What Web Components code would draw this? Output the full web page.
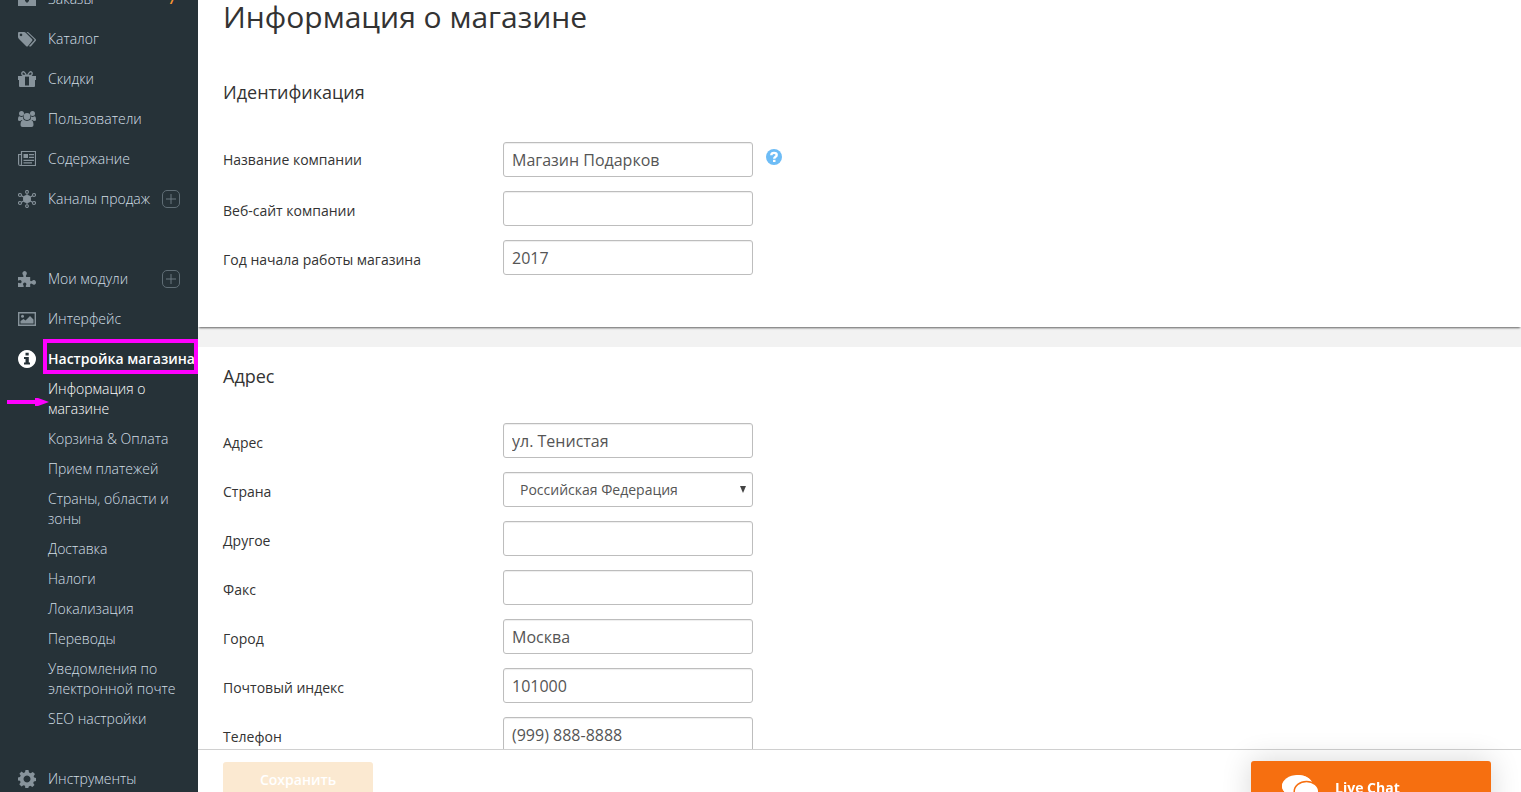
<!DOCTYPE html>
<html lang="ru">
<head>
<meta charset="utf-8">
<title>Информация о магазине</title>
<style>
html,body{height:100%}
body{margin:0;font-family:"Open Sans","Noto Sans",sans-serif;font-size:14px;line-height:20px;color:#333;overflow:hidden}
</style>
</head>
<body>
<admin-app>
  <side-nav slot="nav">
    <nav-item icon="orders" badge="7">Заказы</nav-item>
    <nav-item icon="tags">Каталог</nav-item>
    <nav-item icon="gift">Скидки</nav-item>
    <nav-item icon="users">Пользователи</nav-item>
    <nav-item icon="news">Содержание</nav-item>
    <nav-item icon="hub" add>Каналы продаж</nav-item>
    <nav-item icon="puzzle" add group>Мои модули</nav-item>
    <nav-item icon="image">Интерфейс</nav-item>
    <nav-item icon="info" active>Настройка магазина</nav-item>
    <sub-nav>
      <sub-item active>Информация о магазине</sub-item>
      <sub-item>Корзина &amp; Оплата</sub-item>
      <sub-item>Прием платежей</sub-item>
      <sub-item>Страны, области и зоны</sub-item>
      <sub-item>Доставка</sub-item>
      <sub-item>Налоги</sub-item>
      <sub-item>Локализация</sub-item>
      <sub-item>Переводы</sub-item>
      <sub-item>Уведомления по электронной почте</sub-item>
      <sub-item>SEO настройки</sub-item>
    </sub-nav>
    <nav-item icon="gear">Инструменты</nav-item>
  </side-nav>
  <page-title>Информация о магазине</page-title>
  <form-section heading="Идентификация" first>
    <form-row label="Название компании" value="Магазин Подарков" help></form-row>
    <form-row label="Веб-сайт компании"></form-row>
    <form-row label="Год начала работы магазина" value="2017"></form-row>
  </form-section>
  <form-section heading="Адрес">
    <form-row label="Адрес" value="ул. Тенистая"></form-row>
    <form-row label="Страна" type="select" value="Российская Федерация"></form-row>
    <form-row label="Другое"></form-row>
    <form-row label="Факс"></form-row>
    <form-row label="Город" value="Москва"></form-row>
    <form-row label="Почтовый индекс" value="101000"></form-row>
    <form-row label="Телефон" value="(999) 888-8888"></form-row>
  </form-section>
  <save-bar slot="footer">Сохранить</save-bar>
  <live-chat slot="chat">Live Chat</live-chat>
</admin-app>
<script>
const ICONS = {
  orders:'<path fill-rule="evenodd" d="M0 1h18v15H0zM7 9v2l2 2 2-2V9z"/>',
  tags:'<path fill-rule="evenodd" d="M0 3q0-1 1-1h5q1 0 2 1l6 6q1 1 0 2l-4 5q-1 1-2 0L1 9Q0 8 0 7zM3 3.600a1.300 1.300 0 1 0 .01 0z"/><path d="M8.500 2h1.500l7.500 7q1 1 0 2l-4.500 5.200q-1 .8-2-.2l5.200-5.500q.5-.7 0-1.300z"/>',
  gift:'<path d="M0 6h7v6H1V10H0zM11 6h7v4h-1v2h-6zM1 10h6v7H2q-1 0-1-1zM11 10h6v6q0 1-1 1h-5zM7 5h4v1.500H7zM7 15.500h4V17H7z"/><path d="M8.500 5.500C7 2 5.500 1.400 4.500 2S3.500 5 5 5.500zM9.500 5.500C11 2 12.500 1.400 13.500 2S14.500 5 13 5.500z" fill="none" stroke="currentColor" stroke-width="1.400"/>',
  users:'<circle cx="3.500" cy="3.500" r="2.500"/><circle cx="14.500" cy="3.500" r="2.500"/><circle cx="9" cy="6.500" r="3.400"/><path d="M0 10q0-4 1.500-3.700 2 1.200 3.500.2Q4.800 8.500 6 10H3.500Q2.500 11 2 11 0 11 0 10zM18 10q0-4-1.500-3.700-2 1.200-3.500.2.200 2-1 3.500h2.500q1 1 1.500 1 2 0 2-1zM2.500 15q0-5 3-5.200Q9 12 12.500 9.800q3 .2 3 5.200 0 2-2 2h-9q-2 0-2-2z"/>',
  news:'<path d="M3.500 1.500h14v14H2.500Q.6 15.500.6 14V4.500h2.900zM3.500 4v10q0 1.400-1.200 1.500" fill="none" stroke="currentColor" stroke-width="1.200"/><path d="M5.500 4H10v4H5.500zM11 4h5v1.200h-5zM11 6.800h5V8h-5zM5.500 9.700H16v1.200H5.500zM5.500 12.300H14v1.200H5.500z"/>',
  hub:'<g fill="none" stroke="currentColor" stroke-width="1.100"><circle cx="9" cy="1.900" r="1.400"/><circle cx="9" cy="16.100" r="1.400"/><circle cx="2" cy="5" r="1.500"/><circle cx="16" cy="5" r="1.500"/><circle cx="2" cy="13" r="1.500"/><circle cx="16" cy="13" r="1.500"/><path d="M9 3.500v11M3.500 5.800l11 6.400M14.500 5.800l-11 6.400"/></g><circle cx="9" cy="9" r="4"/>',
  puzzle:'<path d="M0 7h5.300Q5.800 6 5 5q-1-1.300-.5-2.500Q5.200 1 6.700 1t2 1.500Q9.200 4 8.200 5q-.7 1 0 2h4v3.800q1 .8 2-.1 1.200-1.200 2.700-.4Q18 11 18 12.500t-1.100 2q-1.500.7-2.600-.4-1.100-1-2.100 0V17H8q-.6-.8 0-1.700.9-1.300 0-2.400-1.200-.9-2.500 0-1 1.200 0 2.500.5.900 0 1.600H0v-4q.5-.6 1.500 0 1.300.6 2-.5.500-1.500-.6-2.300-1.200-.6-2.200.3-.6.300-.7-.3z"/>',
  image:'<path d="M.7 2.700h16.600v12.600H.7z" fill="none" stroke="currentColor" stroke-width="1.400"/><circle cx="4.500" cy="6.300" r="1.500"/><path d="M2.500 13.500V11l3-2 2 1.500L12 6l3.500 3.500v4z"/>',
  info:'<path fill-rule="evenodd" d="M9 0a9 9 0 1 0 .01 0zM7.500 2.800h3.200v2.700H7.500zM6 7h4.800v5.500H12v2H6v-2h1.500V9H6z"/>',
  gear:'<path fill-rule="evenodd" d="M7.500 0h3l.5 2.500 1.600.7L14.800 2 17 4.100l-1.400 2.100.6 1.400 1.800.4v3l-2.100.4-.7 1.500 1.300 2-2.100 2.200-2.100-1.300-1.500.6-.5 1.600h-3L7 15.800l-1.500-.6-2.100 1.300-2.100-2.200 1.300-2-.6-1.500L0 10.500v-3l2-.5.700-1.500L1.400 3.700 3.500 1.600l2 1.300 1.500-.6zM9 5.500a3.500 3.500 0 1 0 .01 0z"/>'
};
const svg = (name) => `<svg viewBox="0 0 18 18" width="18" height="18" fill="currentColor" aria-hidden="true">${ICONS[name]}</svg>`;

class Base extends HTMLElement {
  connectedCallback() {
    if (!this.shadowRoot) this.attachShadow({mode:'open'}).innerHTML = '<style>*{box-sizing:border-box}</style>' + this.render();
  }
}

customElements.define('admin-app', class extends Base {
  render() { return `<style>
    :host{display:grid;grid-template-columns:198px 1fr;height:100vh;background:#fff}
    .work{display:flex;flex-direction:column;min-width:0;min-height:0}
    main{flex:1;min-height:0;overflow:hidden}
    ::slotted(side-nav){min-height:0}
    </style><slot name="nav"></slot><div class="work"><main><slot></slot></main><slot name="footer"></slot></div><slot name="chat"></slot>`; }
});

customElements.define('side-nav', class extends Base {
  render() { return `<style>
    :host{display:block;background:#263238;overflow:hidden}
    nav{margin-top:-21px}
    </style><nav aria-label="Меню"><slot></slot></nav>`; }
});

customElements.define('nav-item', class extends Base {
  render() {
    const active = this.hasAttribute('active');
    return `<style>
    :host{display:flex;align-items:center;position:relative;height:40px;padding:0 18px;font-weight:300;color:#d2dfe6}
    :host([group]){margin-top:40px}
    :host([active]){color:#fff;font-weight:600;padding-right:0}
    a{display:flex;align-items:center;gap:12px;flex:1;color:inherit;text-decoration:none;white-space:nowrap}
    svg{flex:none;color:#87939b}
    :host([active]) svg{color:#fff}
    button{width:18px;height:18px;padding:0;border:1px solid #5f6d75;border-radius:5px;background:none;color:#7b8991;display:grid;place-items:center}
    b{color:#f79432;font-weight:600;margin-right:4px}
    .mark{position:absolute;left:43px;right:0;top:0;height:35px;border:4px solid #f0f;pointer-events:none}
    </style><a href="#">${svg(this.getAttribute('icon'))}<span><slot></slot></span></a>
    ${this.hasAttribute('badge') ? `<b>${this.getAttribute('badge')}</b>` : ''}
    ${this.hasAttribute('add') ? '<button type="button" aria-label="Добавить"><svg width="10" height="10" viewBox="0 0 10 10" fill="none" stroke="#6b7880"><path d="M5 0v10M0 5h10"/></svg></button>' : ''}
    ${active ? '<div class="mark"></div>' : ''}`;
  }
});

customElements.define('sub-nav', class extends Base {
  render() { return `<style>:host{display:flex;flex-direction:column;gap:10px;padding:0 18px 0 48px;margin-bottom:30px}</style><slot></slot>`; }
});

customElements.define('sub-item', class extends Base {
  render() { return `<style>
    :host{display:block;position:relative;font-weight:300;color:#d2dfe6}
    :host([active]){color:#fff}
    a{display:block;color:inherit;text-decoration:none}
    .arrow{position:absolute;left:-41px;top:19px}
    </style><a href="#"><slot></slot></a>
    ${this.hasAttribute('active') ? '<svg class="arrow" width="42" height="8" viewBox="0 0 42 8" fill="#f0f" aria-hidden="true"><path d="M0 2h28V0h3l11 4-11 4h-3V6H0z"/></svg>' : ''}`; }
});

customElements.define('page-title', class extends Base {
  render() { return `<style>:host{display:block;padding:0 25px}h1{margin:0;font-size:30px;line-height:34px;font-weight:400;color:#333}</style><h1><slot></slot></h1>`; }
});

customElements.define('form-section', class extends Base {
  render() { return `<style>
    :host{display:block;padding:17px 25px 52px;background:#fff;border-top:20px solid #f2f2f2}
    :host([first]){border-top:0;padding-top:46px;position:relative;box-shadow:0 2px 2px -1px rgba(0,0,0,.6)}
    h2{margin:0 0 35px;font-size:18px;line-height:24px;font-weight:400;color:#333}
    :host([first]) h2{margin-bottom:38px}
    .rows{display:flex;flex-direction:column;gap:14px}
    </style><section><h2>${this.getAttribute('heading')}</h2><div class="rows"><slot></slot></div></section>`; }
});

customElements.define('form-row', class extends Base {
  render() {
    const v = this.getAttribute('value') || '';
    const control = this.getAttribute('type') === 'select'
      ? `<span class="pick"><select id="f"><option>${v}</option></select><svg width="6" height="7" viewBox="0 0 6 7" aria-hidden="true"><path d="M0 0h6L3 7z" fill="#444"/></svg></span>`
      : `<input id="f" type="text" value="${v}">`;
    return `<style>
    :host{display:grid;grid-template-columns:280px 250px auto;justify-content:start;align-items:start}
    label{padding-top:10px;color:#333}
    :host([help]) label{padding-top:8px}
    input,select{display:block;width:100%;height:35px;margin:0;padding:0 8px;border:1px solid #bdbdbd;border-radius:3px;background:#fff;box-shadow:inset 0 1px 1px rgba(0,0,0,.07);font:16px/20px "Open Sans","Noto Sans",sans-serif;color:#555}
    select{appearance:none;font-size:14px;padding:0 16px}
    .pick{position:relative;display:block}
    .pick svg{position:absolute;right:7px;top:14px;pointer-events:none}
    button{margin:7px 0 0 13px;padding:0;border:0;background:none;width:16px;height:16px}
    button svg{display:block}
    </style><label for="f">${this.getAttribute('label')}</label>${control}
    ${this.hasAttribute('help') ? '<button type="button" aria-label="Справка"><svg width="16" height="16" viewBox="0 0 16 16"><circle cx="8" cy="8" r="8" fill="#6dbcf6"/><path d="M5.300 6.200Q5.300 3.900 8 3.900t2.700 2q0 1.200-1.400 2Q8.200 8.600 8.200 9.800" fill="none" stroke="#fff" stroke-width="2.400"/><path d="M7 10.800h2.500v2.200H7z" fill="#fff"/></svg></button>' : ''}`;
  }
});

customElements.define('save-bar', class extends Base {
  render() { return `<style>
    :host{display:block;flex:none;height:43px;overflow:hidden;border-top:1px solid #d0d0d0;background:#fff;padding:12px 25px 0;box-sizing:border-box}
    button{display:block;width:150px;height:36px;border:0;border-radius:3px;background:#fbe9d1;color:#fff;font:600 14px/20px "Open Sans","Noto Sans",sans-serif;padding:0}
    </style><button type="button" disabled><slot></slot></button>`; }
});

customElements.define('live-chat', class extends Base {
  render() { return `<style>
    :host{display:block;position:fixed;right:30px;bottom:-23px;width:240px}
    button{display:flex;align-items:center;gap:16px;width:100%;height:54px;padding:0 31px;border:0;border-radius:3px;background:#f66f10;color:#fff;font:700 14px/20px "Open Sans","Noto Sans",sans-serif;box-shadow:0 0 30px rgba(0,0,0,.16)}
    </style><button type="button"><svg width="37" height="28" viewBox="0 0 37 28" aria-hidden="true"><path d="M15.500 1C24 1 31 5.500 31 12s-7 11-15.500 11q-3 0-5.500-.8Q7 25 2 25q3-3 2.800-5.600Q0 17 0 12 0 5.500 15.500 1z" fill="#fff"/><ellipse cx="15.500" cy="12" rx="15.500" ry="11" fill="#fff"/><ellipse cx="24.500" cy="17.500" rx="12.300" ry="10" fill="#fff" stroke="#f66f10" stroke-width="1.500"/></svg><span><slot></slot></span></button>`; }
});
</script>
</body>
</html>
